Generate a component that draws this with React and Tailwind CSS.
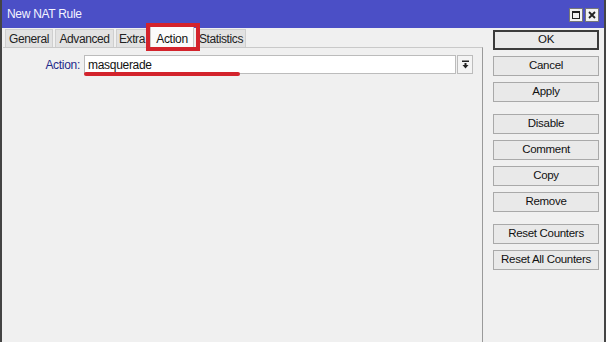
import React from "react";

function Btn({ children, primary }) {
  return (
    <div
      className={
        "h-[20px] w-[106px] flex items-center justify-center text-[11.5px] tracking-[-0.3px] text-[#111] bg-[#e9e9e9] " +
        (primary ? "border-2 border-[#3a3a3a]" : "border border-[#a9a9a9]")
      }
    >
      {children}
    </div>
  );
}

export default function App() {
  const tabs = [
    ["General", "w-[48px]"],
    ["Advanced", "w-[59px]"],
    ["Extra", "w-[32px]"],
    ["Action", "w-[44px]"],
    ["Statistics", "w-[50px]"],
  ];
  return (
    <div
      className="relative w-[606px] h-[342px] overflow-hidden bg-[#f0f0f0] border-l-[2px] border-r-[2px] border-[#444] flex flex-col"
      style={{ fontFamily: '"Liberation Sans", Arial, sans-serif' }}
    >
      {/* Title bar */}
      <div className="h-[28px] shrink-0 bg-[#4b4fc6] flex items-center justify-between pl-[5px] pr-[5px]">
        <span className="text-[12px] tracking-[-0.3px] text-[#f4f4ff]">New NAT Rule</span>
        <div className="flex gap-[2px] mt-[1px]">
          <div className="w-[14px] h-[14px] bg-[#f2f2f2] border border-[#777] flex items-center justify-center">
            <div className="w-[8px] h-[8px] border border-[#222] border-t-2"></div>
          </div>
          <div className="w-[14px] h-[14px] bg-[#f2f2f2] border border-[#777] flex items-center justify-center">
            <svg width="8" height="8" viewBox="0 0 8 8">
              <path d="M1 1 L7 7 M7 1 L1 7" stroke="#222" strokeWidth="1.8" />
            </svg>
          </div>
        </div>
      </div>

      <div className="flex flex-1">
        {/* Left area */}
        <div className="w-[481px] flex flex-col">
          <div className="flex items-end h-[20px] pl-[3px] gap-[2px] mt-[-1px]">
            {tabs.map(([t, w]) =>
              t === "Action" ? (
                <div
                  key={t}
                  className={
                    w +
                    " h-[22px] bg-[#fbfbfb] border border-b-0 border-[#c9c9c9] flex justify-center pt-[3px] text-[12px] tracking-[-0.3px] text-[#111] relative z-10 mb-[-1px]"
                  }
                >
                  {t}
                </div>
              ) : (
                <div
                  key={t}
                  className={
                    w +
                    " h-[18px] bg-[#e2e2e2] border border-b-0 border-[#cfcfcf] flex items-center justify-center text-[12px] tracking-[-0.4px] text-[#222] whitespace-nowrap"
                  }
                >
                  {t}
                </div>
              )
            )}
          </div>
          <div className="flex-1 border-t border-r border-[#c9c9c9] border-r-[#9a9a9a] ml-[1px] pt-[7px]">
            <div className="flex items-center h-[19px]">
              <span className="w-[81px] text-right pr-[4px] text-[12px] tracking-[-0.3px] text-[#1e2a8a]">Action:</span>
              <div className="w-[372px] h-[19px] bg-white border border-[#bcbcbc] flex items-center pl-[3px] text-[12px] tracking-[-0.3px] text-[#111]">
                masquerade
              </div>
              <div className="ml-[1px] w-[16px] h-[19px] bg-[#f4f4f4] border border-[#bcbcbc] flex items-center justify-center">
                <svg width="9" height="9" viewBox="0 0 9 9">
                  <rect x="1" y="0.5" width="7" height="1.5" fill="#222" />
                  <path d="M3.5 3 H5.5 V5 H7.5 L4.5 8.5 L1.5 5 H3.5 Z" fill="#222" />
                </svg>
              </div>
            </div>
          </div>
        </div>

        {/* Right column */}
        <div className="flex flex-col pl-[10px] pt-[2px]">
          <div className="flex flex-col gap-[6px]">
            <Btn primary>OK</Btn>
            <Btn>Cancel</Btn>
            <Btn>Apply</Btn>
          </div>
          <div className="flex flex-col gap-[6px] mt-[12px]">
            <Btn>Disable</Btn>
            <Btn>Comment</Btn>
            <Btn>Copy</Btn>
            <Btn>Remove</Btn>
          </div>
          <div className="flex flex-col gap-[6px] mt-[12px]">
            <Btn>Reset Counters</Btn>
            <Btn>Reset All Counters</Btn>
          </div>
        </div>
      </div>

      {/* Annotations */}
      <div className="absolute left-[144px] top-[23px] w-[54px] h-[28px] border-[4px] border-[#d3232c] z-20"></div>
      <div className="absolute left-[82px] top-[72px] w-[156px] h-[4px] rounded-full bg-[#d3232c] z-20"></div>
    </div>
  );
}
